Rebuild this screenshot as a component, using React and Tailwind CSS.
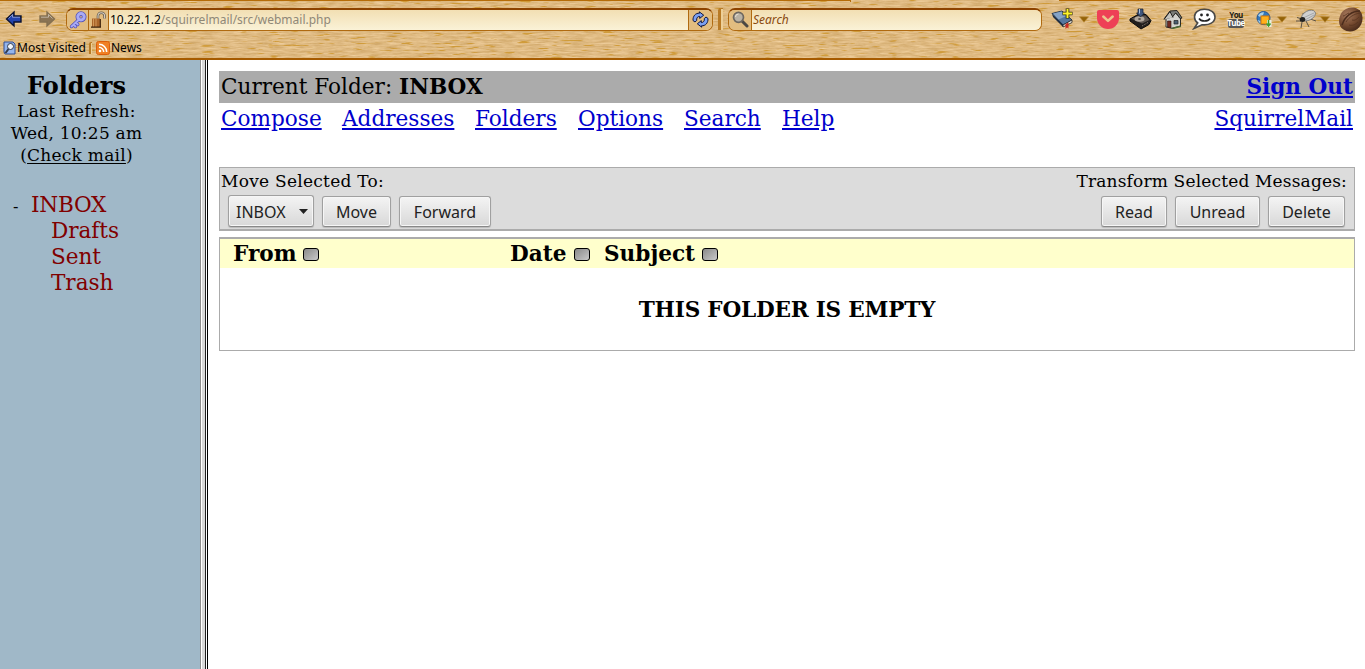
import React from "react";

const Wood = () => (
  <svg className="absolute inset-0 h-full w-full" aria-hidden="true">
    <filter id="grain" x="0" y="0" width="100%" height="100%" colorInterpolationFilters="sRGB">
      <feTurbulence type="fractalNoise" baseFrequency="0.07 0.6" numOctaves="4" seed="8" />
      <feColorMatrix values="0.17 0 0 0 0.79  0.21 0 0 0 0.625  0.28 0 0 0 0.37  0 0 0 0 1" />
    </filter>
    <filter id="streak" x="0" y="0" width="100%" height="100%" colorInterpolationFilters="sRGB">
      <feTurbulence type="fractalNoise" baseFrequency="0.06 0.6" numOctaves="2" seed="31" />
      <feColorMatrix values="0 0 0 0 0.8  0 0 0 0 0.58  0 0 0 0 0.16  8 0 0 0 -5" />
    </filter>
    <rect width="100%" height="100%" filter="url(#grain)" />
    <rect width="100%" height="100%" filter="url(#streak)" opacity="0.8" />
  </svg>
);

const Arrow = ({ flip, fill, stroke }) => (
  <svg width="18" height="18" viewBox="0 0 18 18" className={flip ? "-scale-x-100" : ""}>
    <path d="M1.500 9 9 2v4h7v6H9v4z" fill={fill} stroke={stroke} strokeWidth="1.4" />
    <path d="M3.500 8.500 7.500 4.500v2.700H15" fill="none" stroke="#fff" strokeOpacity=".45" />
  </svg>
);

const Caret = () => (
  <svg width="10" height="7" viewBox="0 0 10 7"><path d="M.5.8h9L5 6.200z" fill="#936208" stroke="#b98934" strokeWidth=".6" /></svg>
);

const KeyIcon = () => (
  <svg width="18" height="18" viewBox="0 0 18 18">
    <path d="M10 8.500 2.500 15.500M4.500 13.500l2 2M6.800 11.500l2 2" stroke="#5554b8" strokeWidth="3.400" strokeLinecap="round" />
    <circle cx="12" cy="5.800" r="3.200" fill="none" stroke="#5554b8" strokeWidth="4.600" />
    <path d="M10 8.500 2.500 15.500M4.500 13.500l2 2M6.800 11.500l2 2" stroke="#a9abf5" strokeWidth="1.800" strokeLinecap="round" />
    <circle cx="12" cy="5.800" r="3.200" fill="none" stroke="#a9abf5" strokeWidth="3" />
  </svg>
);

const LockIcon = () => (
  <svg width="17" height="18" viewBox="0 0 17 18">
    <path d="M8 9V5a3.300 3.300 0 0 1 6.600 0v2.500" fill="none" stroke="#665b4c" strokeWidth="2.600" />
    <path d="M8 9V5a3.300 3.300 0 0 1 6.600 0v2.500" fill="none" stroke="#d8d0c2" strokeWidth="1.100" />
    <rect x="2" y="7.500" width="8" height="8.500" fill="#a9652a" />
    <path d="M3.500 7.500V16M6 7.500V16" stroke="#d29a5a" />
    <path d="M1 16.200h10M10.300 8v8" stroke="#3d220b" strokeWidth="1.200" />
  </svg>
);

const Reload = () => (
  <svg width="17" height="17" viewBox="0 0 17 17">
    <g stroke="#0d1640" strokeWidth="1" fill="#7ba0f2" strokeLinejoin="round">
      <path d="M1 9.500C.8 5 3.500 2 7.500 2.200L7.300.8l4.400 3.400-4 3.200v-2C5.500 5.500 4.300 7 4.700 9.500L3 11z" />
      <path d="M16 7.500c.2 4.500-2.500 7.500-6.500 7.300l.2 1.400-4.400-3.400 4-3.200v2c2.200-.1 3.400-1.600 3-4.100L14 6z" />
    </g>
  </svg>
);

const Magnifier = () => (
  <svg width="17" height="17" viewBox="0 0 17 17">
    <path d="m10 10 5 5" stroke="#4c4843" strokeWidth="3" strokeLinecap="round" />
    <circle cx="6.500" cy="6.300" r="5" fill="#b9b2a5" stroke="#6d675f" strokeWidth="1.700" />
    <path d="M3.500 6a3 3 0 0 1 3-3" fill="none" stroke="#e8e2d6" />
  </svg>
);

const BookPlus = () => (
  <svg width="24" height="22" viewBox="0 0 24 22">
    <path d="m1 5.500 10-2.500 10 9-9 5z" fill="#56779f" stroke="#26384f" />
    <path d="m2 5.500 8.500-2 5 4.500-8 3.500z" fill="#86a3c6" />
    <path d="m1 6 11 10.500v2.500L2 9z" fill="#1d2c42" />
    <path d="m12 17 9-5v2.500l-9 4.500z" fill="#f1eee6" stroke="#222" strokeWidth=".8" />
    <path d="m14.500 16 3-1.500v6l-1.500-1-1.500 1.500z" fill="#c92b23" />
    <path d="M16.500.5v10M11.500 5.500h10" stroke="#27260a" strokeWidth="3.600" />
    <path d="M16.500 1v9M12 5.500h9" stroke="#fff32b" strokeWidth="2" />
  </svg>
);

const Pocket = () => (
  <svg width="22" height="19" viewBox="0 0 22 19">
    <path d="M2 0h18a2 2 0 0 1 2 2v6a11 11 0 0 1-22 0V2a2 2 0 0 1 2-2z" fill="#ee4056" />
    <path d="m6.300 6.500 4.700 4.400 4.700-4.400" fill="none" stroke="#ecc58e" strokeWidth="2.500" strokeLinecap="round" strokeLinejoin="round" />
  </svg>
);

const Drive = () => (
  <svg width="24" height="22" viewBox="0 0 24 22">
    <path d="m1 11 8-4.500h8l5 6-2 4-8 4.500L1 13z" fill="#211e1d" stroke="#0c0b0a" />
    <path d="m2.500 10.800 7-3.300h7l4 4.500-7.500 3.500z" fill="#5d5550" />
    <ellipse cx="10.500" cy="11" rx="5" ry="2.800" fill="#b0a79d" />
    <ellipse cx="10.500" cy="11" rx="1.500" ry=".8" fill="#3b3530" />
    <path d="m13 18 6-3.500" stroke="#92847a" strokeDasharray="1 1" />
    <path d="M9 1h5v4h1.500l-4 4-4-4H9z" fill="#40577e" stroke="#111b2e" strokeWidth=".7" />
    <path d="M10.500 1v4.500" stroke="#a9c1e0" />
  </svg>
);

const Home = () => (
  <svg width="20" height="20" viewBox="0 0 20 20">
    <path d="M3 9.500V18l6 1.300L17.500 17V8.500L11 3z" fill="#d3d3cf" stroke="#2b2a27" />
    <path d="M1 10 7 2l7-.5L19 9l-2 .5-3.500-5-1-.5L9.500 8z" fill="#7b7d7a" stroke="#23221f" />
    <path d="m1 10.500 6-8 3 6" fill="#c3c3bf" stroke="#23221f" />
    <path d="M4.500 12h3.500v6.700L4.500 18z" fill="#742b22" stroke="#2c120e" strokeWidth=".6" />
    <path d="M11 11.500h4V15h-4z" fill="#4a5e72" stroke="#222" strokeWidth=".7" />
    <path d="M9 19.500 18 17.300" stroke="#4d6933" strokeWidth="1.600" />
  </svg>
);

const Chat = () => (
  <svg width="24" height="22" viewBox="0 0 24 22">
    <path d="M12.500 1.300C6.500 1.300 2.500 4.500 2.500 9c0 2.500 1.200 4.500 3.200 6L2 20.500l8-3.800c7.500 1 13-2.500 13-7.700 0-4.500-4.500-7.700-10.500-7.700z" fill="#fff" stroke="#4b4a48" strokeWidth="1.600" />
    <circle cx="9.500" cy="7" r="1.400" fill="#222" /><circle cx="15.500" cy="7" r="1.400" fill="#222" />
    <path d="M7 10.500c2 3.300 9 3.300 11 0" fill="none" stroke="#222" strokeWidth="1.500" />
  </svg>
);

const YouTube = () => (
  <div className="flex w-4 flex-col items-center font-['Open_Sans',sans-serif] text-[8px] leading-[8px] font-bold tracking-[-0.5px]">
    <span className="text-[#1d1a16]">You</span>
    <span className="flex h-[9px] w-4 items-center justify-center rounded-[2px] bg-[#555] text-white">Tube</span>
  </div>
);

const Globe = () => (
  <svg width="16" height="17" viewBox="0 0 16 17">
    <circle cx="7.500" cy="7" r="6.500" fill="#3378bd" stroke="#24558f" />
    <path d="M2 4.500c2-3 4.500-3.500 6-3L7 4 4 6zM1.500 9l3 1v3z" fill="#a9d0e8" />
    <rect x="5" y="5" width="8" height="8" fill="#ffb01a" stroke="#cf7609" />
    <path d="M11 9h4.500v7H11z" fill="#e9eee2" /><path d="M12.500 9v6M10.500 12.500l2 2.500 2-2.500" stroke="#3d9e2c" strokeWidth="1.500" fill="none" />
  </svg>
);

const Bug = () => (
  <svg width="23" height="20" viewBox="0 0 23 20">
    <path d="M1 12h5M2 8.500 7 10M7 13l-1 6M11 12l3 6M15 10l6 2M9 9 8 4" stroke="#4d463d" strokeWidth=".9" fill="none" />
    <ellipse cx="13.500" cy="6.500" rx="7.500" ry="4.600" transform="rotate(-28 13.500 6.500)" fill="#cfd0d1" stroke="#777" strokeWidth=".8" />
    <path d="m8 9 11-5M10 11l9-5" stroke="#9b9d9f" strokeWidth=".8" />
    <ellipse cx="7.500" cy="10.500" rx="2.800" ry="2.500" fill="#222" />
  </svg>
);

const Walnut = () => (
  <svg width="25" height="25" viewBox="0 0 25 25">
    <defs>
      <radialGradient id="shell" cx=".35" cy=".3" r=".8"><stop stopColor="#a5785c" /><stop offset=".55" stopColor="#74492f" /><stop offset="1" stopColor="#3f2416" /></radialGradient>
    </defs>
    <path d="M8 2c6-3 13-1 15.500 4 2 5 1 11-2.500 14.500-4 4.500-11 5-15.500 2C1 20 0 14 2 9c1-3.500 3-5.500 6-7z" fill="url(#shell)" />
    <path d="M22 4C14 4 7 9 4 18" fill="none" stroke="#4b2c1c" strokeWidth="1.500" />
    <path d="M22 6C16 7 11 10 8 15M5 9c2 0 3-2 6-3M14 13c3 1 5-1 7-3M11 18c3 1 6 0 9-3" fill="none" stroke="#55341f" strokeWidth=".8" />
  </svg>
);

const SortBox = () => (
  <span className="mt-[2px] block h-[13px] w-4 rounded-[3px] border-[1.5px] border-black bg-linear-to-br from-[#8a8a8a] to-[#c9c9c9]" />
);

const Btn = ({ children, className }) => (
  <button className={"h-[31px] rounded-[3px] border border-[#a0a0a0] border-b-[#888] bg-linear-to-b from-[#f4f4f4] to-[#d8d8d8] pt-px font-['Noto_Sans',sans-serif] text-[16px] leading-[28px] text-[#222] shadow-[inset_0_0_0_1px_#f6f6f6,0_1px_1px_#bbb] " + className}>
    {children}
  </button>
);

const Toolbar = () => (
  <header className="relative h-[60px] shrink-0 overflow-hidden border-b-2 border-[#a65b00] font-['Noto_Sans',sans-serif] text-[12px] text-black">
    <Wood />
    <div className="relative flex h-[38px] items-center">
      <div className="absolute top-0 left-0 h-[2px] w-[851px] border-t border-r border-[#b56c08]" />
      <div className="absolute top-0 right-0 h-px w-[306px] bg-[#b56c08]" />
      <div className="ml-[5px]"><Arrow fill="#2343ae" stroke="#0b1230" /></div>
      <div className="ml-[15px]"><Arrow flip fill="#8b7454" stroke="#857050" /></div>
      <div className="ml-[10px] flex h-[23px] w-[647px] overflow-hidden rounded-[7px] border border-t-2 border-[#b06a10] border-t-[#8d4300] bg-[#f6e9c4]">
        <div className="flex w-[22px] items-center justify-center border-r border-[#b06a10] bg-[#e2bd80]"><KeyIcon /></div>
        <div className="flex w-5 items-center justify-center border-r border-[#b06a10] bg-[#e2bd80]"><LockIcon /></div>
        <div className="flex-1 bg-linear-to-b from-[#f2dfb3] to-[#faf2d7] pl-px leading-[20px]">10.22.1.2<span className="text-[#8f8878]">/squirrelmail/src/webmail.php</span></div>
        <div className="flex w-6 items-center justify-center border-l border-[#b06a10] bg-[#e2bd80]"><Reload /></div>
      </div>
      <div className="ml-[5px] h-[22px] w-[5px] shrink-0 rounded-tl-[3px] border-t border-l-[3px] border-[#b87a25] bg-[#edcf98]" />
      <div className="ml-[5px] flex h-[23px] w-[314px] overflow-hidden rounded-[7px] border border-t-2 border-[#b06a10] border-t-[#8d4300]">
        <div className="flex w-[23px] items-center justify-center border-r border-[#b06a10] bg-[#e2bd80]"><Magnifier /></div>
        <div className="flex-1 bg-linear-to-b from-[#f2dfb3] to-[#faf2d7] pl-px leading-[20px] text-[#8a4a10] italic">Search</div>
      </div>
      <div className="flex h-full flex-1 items-center pl-[9px]">
        <BookPlus /><div className="mr-[8px] ml-[4px]"><Caret /></div><Pocket />
        <div className="ml-[10px]"><Drive /></div><div className="ml-[10px]"><Home /></div>
        <div className="ml-[9px]"><Chat /></div><div className="ml-[12px]"><YouTube /></div>
        <div className="ml-[12px]"><Globe /></div><div className="ml-[5px]"><Caret /></div>
        <div className="ml-[8px]"><Bug /></div><div className="ml-[2px]"><Caret /></div>
        <div className="ml-[8px] shrink-0"><Walnut /></div>
      </div>
    </div>
    <div className="relative flex h-[20px] items-center pl-[3px] leading-[18px]">
      <svg width="13" height="14" viewBox="0 0 13 14" className="mr-px shrink-0">
        <path d="M1 1h9l2 2v10H2L1 11z" fill="#94b5ec" stroke="#304f92" />
        <circle cx="7.500" cy="5.500" r="3" fill="#f2f6fc" stroke="#333c4d" /><path d="m5.500 8-3 4" stroke="#333c4d" strokeWidth="2" />
      </svg>
      <span className="w-[69px] whitespace-nowrap">Most Visited</span>
      <span className="mx-[3px] h-3 w-[3px] shrink-0 rounded-tl-[2px] border-t border-l-2 border-[#b87a25] bg-[#edcf98]" />
      <svg width="14" height="14" viewBox="0 0 14 14" className="ml-px mr-px shrink-0">
        <rect x=".5" y=".5" width="13" height="13" rx="2" fill="#f08024" stroke="#dc5e0b" />
        <circle cx="4" cy="10" r="1.300" fill="#fff" /><path d="M3 6.300A4.700 4.700 0 0 1 7.700 11M3 3.300A7.700 7.700 0 0 1 10.700 11" fill="none" stroke="#fff" strokeWidth="1.500" />
      </svg>
      <span>News</span>
    </div>
  </header>
);

const folders = ["Drafts", "Sent", "Trash"];
const menu = [
  ["Compose", "w-[121px]"],
  ["Addresses", "w-[133px]"],
  ["Folders", "w-[103px]"],
  ["Options", "w-[106px]"],
  ["Search", "w-[98px]"],
  ["Help", "w-[60px]"],
];

export default function App() {
  return (
    <div className="flex h-[669px] w-[1365px] flex-col overflow-hidden bg-white font-['DejaVu_Serif',serif] text-[21.6px] text-black">
      <Toolbar />
      <div className="flex flex-1">
        <aside className="w-[200px] bg-[#a0b8c8]">
          <div className="w-[153px] pt-[11px] text-center text-[17px] leading-[22px] tracking-[0.25px]">
            <h1 className="h-[29px] text-[24px] leading-[30px] font-bold tracking-normal">Folders</h1>
            <p>Last Refresh:</p>
            <p>Wed, 10:25 am</p>
            <p>(<a className="underline underline-offset-2">Check mail</a>)</p>
          </div>
          <div className="mt-[26px] leading-[26px] tracking-[-0.25px] text-[#800000]">
            <div className="flex"><span className="w-[31px] pt-[2px] pl-[13px] text-[16px] text-black">-</span><span className="h-[26px]">INBOX</span></div>
            <div className="-mt-[2px]">
              {folders.map((f) => <div key={f} className="pl-[51px] tracking-[-0.05px]">{f}</div>)}
            </div>
          </div>
        </aside>
        <div className="flex w-2 border-l border-[#8d8d8d] bg-[#d8d8d8]">
          <span className="w-px bg-white" /><span className="w-[3px]" />
          <span className="w-px bg-[#222]" /><span className="w-px bg-white" /><span className="w-px bg-black" />
        </div>
        <main className="flex-1 pt-[11px] pr-[10px] pl-[11px]">
          <div className="flex h-8 justify-between bg-[#ababab] px-[2px] leading-[31px]">
            <span>Current Folder: <b>INBOX</b></span>
            <b className="text-[#0000cc] underline underline-offset-2">Sign Out</b>
          </div>
          <nav className="flex h-8 px-[2px] leading-[31px] text-[#0000cc]">
            {menu.map(([m, w]) => <span key={m} className={w}><a className="underline underline-offset-2">{m}</a></span>)}
            <a className="ml-auto underline underline-offset-2">SquirrelMail</a>
          </nav>
          <section className="mt-8 flex h-16 justify-between border border-b-2 border-[#ababab] bg-[#dcdcdc] text-[17px] tracking-[0.17px]">
            <div className="pl-px">
              <div className="h-7 leading-[26px] tracking-[0.26px]">Move Selected To:</div>
              <div className="flex gap-2 pl-[7px] tracking-normal">
                <Btn className="-mt-px flex h-[32px] w-[86px] items-center justify-between pr-[5px] pl-[7px]">INBOX<svg width="9" height="5" viewBox="0 0 9 5"><path d="M0 0h9L4.500 5z" fill="#222" /></svg></Btn>
                <Btn className="w-[69px]">Move</Btn>
                <Btn className="w-[92px]">Forward</Btn>
              </div>
            </div>
            <div className="pr-[7px]">
              <div className="h-7 text-right leading-[26px]">Transform Selected Messages:</div>
              <div className="flex justify-end gap-2 pr-[2px] tracking-normal">
                <Btn className="w-[66px]">Read</Btn>
                <Btn className="w-[85px]">Unread</Btn>
                <Btn className="w-[77px]">Delete</Btn>
              </div>
            </div>
          </section>
          <section className="mt-[6px] h-[114px] border border-t-2 border-[#ababab] font-bold">
            <div className="flex h-[29px] bg-[#ffffcc] pl-[13px] leading-[29px]">
              <div className="flex w-[277px] items-center gap-[6px]">From <SortBox /></div>
              <div className="flex w-[94px] items-center gap-[8px]">Date <SortBox /></div>
              <div className="flex items-center gap-[7px]">Subject <SortBox /></div>
            </div>
            <p className="pt-[29px] text-center leading-[26px] tracking-[-0.22px]">THIS FOLDER IS EMPTY</p>
          </section>
        </main>
      </div>
    </div>
  );
}
